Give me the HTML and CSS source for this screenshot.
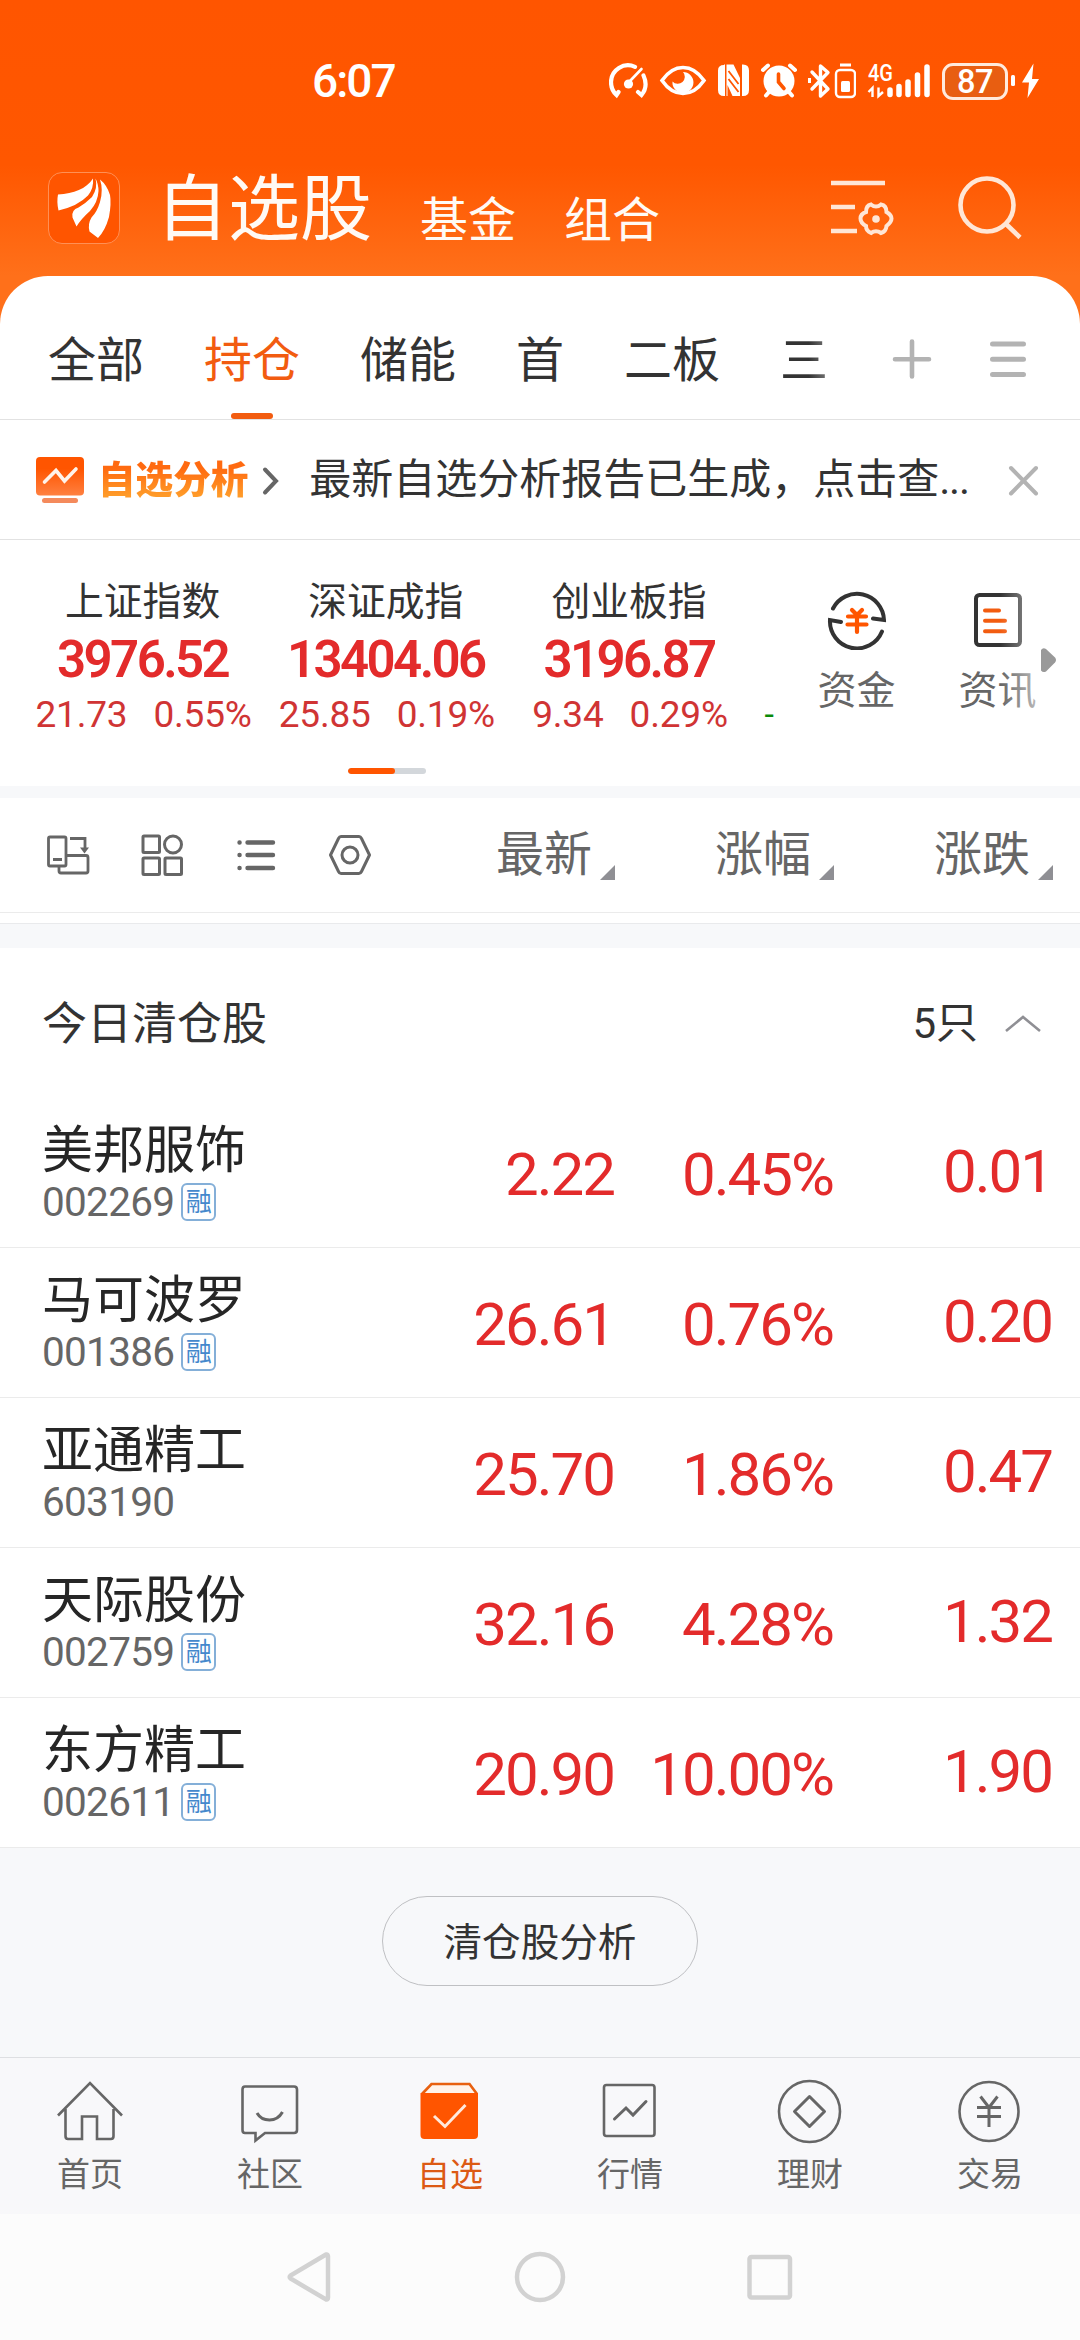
FILE: index.html
```html
<!DOCTYPE html>
<html lang="zh-CN">
<head>
<meta charset="utf-8">
<title>自选股</title>
<link rel="stylesheet" href="styles.css">
</head>
<body>
<div class="app">
  <header class="top">
    <div class="status">
      <span class="clock">6:07</span>
      <div class="status-icons">
        <svg class="i-gauge" width="40" height="38" viewBox="609 62 40 38" fill="none" stroke="#fff" stroke-width="4.2" stroke-linecap="round"><path d="M635 66.8A17 17 0 0 0 611 82q0 8 5.500 13l2-3M643.500 75.500q5 11-2 19.500l-3.500-3"/><path d="M641.500 69L630 81" stroke-width="2.600"/><circle cx="628.500" cy="84" r="4.600" fill="#fff" stroke="none"/></svg>
        <svg class="i-eye" width="48" height="38" viewBox="659 62 48 38"><path d="M662 80.500Q671 67.500 683 67.500T704 80.500Q695 93.500 683 93.500T662 80.500Z" fill="none" stroke="#fff" stroke-width="3.600"/><path d="M683 72a10.500 10.500 0 1 1-10.500 9.500a6.500 6.500 0 0 0 10.500-9.500Z" fill="#fff"/></svg>
        <svg class="i-nfc" width="32" height="38" viewBox="718 62 32 38" fill="#fff"><path d="M724 64.500h1V96h-1q-6 0-6-6V70.500q0-5.500 6-5.500ZM743 64.500q6 0 6 6V90q0 6-6 6h-1V64.500ZM726.500 64.500h7L740 78v-13 31h-7.500L727.500 85v11h-1Z"/><path d="M728.500 71l10 13M728.500 79l10 13" stroke="#ff5600" stroke-width="1.800"/></svg>
        <svg class="i-alarm" width="38" height="38" viewBox="760 62 38 38"><g stroke="#fff" stroke-width="4" stroke-linecap="round"><path d="M763 70l5-4.500M795 70l-5-4.500M769 92l-3 3.500M789 92l3 3.500"/></g><circle cx="779" cy="81" r="15.500" fill="#fff"/><path d="M778.500 74v8l5.500 6.500" fill="none" stroke="#ff5600" stroke-width="3.600" stroke-linecap="round"/></svg>
        <svg class="i-bt" width="48" height="38" viewBox="808 62 48 38" fill="none" stroke="#fff"><path d="M812 72l16 17-7.500 7V66l7.500 6.500L812 89" stroke-width="3.400" stroke-linejoin="round" stroke-linecap="round"/><path d="M809.500 78v5" stroke-width="3"/><path d="M840 65h11" stroke-width="3"/><rect x="836" y="70" width="19" height="27" rx="4" stroke-width="2.400"/><rect x="841" y="81" width="9" height="11" rx="1.500" fill="#fff" stroke="none"/></svg>
        <svg class="i-signal" width="64" height="54" viewBox="867 54 64 54"><text class="net" x="868" y="80.500" textLength="25" lengthAdjust="spacingAndGlyphs">4G</text><g stroke="#fff" stroke-width="5.500" stroke-linecap="round"><path d="M890 90v4.500M899 86.500v8M908 82v12.500M917.500 75v19.500M927 67v27.500"/></g><path d="M872.500 97V88l-4 4M878.500 87.500V96l4.500-4" fill="none" stroke="#fff" stroke-width="2.400"/></svg>
        <div class="battery"><span class="battery-level">87</span></div>
        <svg class="i-bolt" width="30" height="38" viewBox="1010 62 30 38" fill="#fff"><rect x="1011" y="75" width="4" height="11" rx="1.500"/><path d="M1033.500 63.500L1022 82.500h7L1027.500 98 1039 79h-7Z"/></svg>
      </div>
    </div>
    <div class="titlebar">
      <div class="logo"><svg width="72" height="72" viewBox="48 172 72 72" fill="#fff"><path d="M93 178.500C86 189 74 193.500 58 194.500Q56.500 202 58.500 210.500Q78 206 88 195.500Q94 188 93 178.500Z"/><path d="M95.500 178.500Q98 188 92 197Q86 203 78.500 207.500Q71 210 72.500 217.500L76.500 226.500Q81 219 90 211Q98 202 98.500 191Q98.500 184 95.500 178.500Z"/><path d="M100 179.500Q103.500 190 100 202Q97 212 91.500 217.500Q87.500 224 89.500 231.500L98 238Q105 231 109 217Q111.500 203 110 195Q107 185 100 179.500Z"/></svg></div>
      <span class="title">自选股</span>
      <span class="sub">基金</span>
      <span class="sub sub-2">组合</span>
      <svg class="i-set" width="64" height="60" viewBox="830 179 64 60" fill="none" stroke="#ffe6d6" stroke-width="4.600"><path d="M831 184h54M831 208h24M831 232h26"/><path d="M871 205.500Q876 209.500 881 205.500Q886.500 206.500 886.500 213Q891.500 216 891.500 219.500T886.500 227Q886 232.500 881 234Q876 230.500 871 234Q866 232 866 227Q860.500 224 860.500 219.500T866 213Q866 206.500 871 205.500Z" stroke-width="4"/><circle cx="876" cy="220" r="3.800" fill="#ffe6d6" stroke="none"/></svg>
      <svg class="i-search" width="66" height="66" viewBox="957 175 66 66" fill="none" stroke="#ffe6d6" stroke-width="4.600"><circle cx="987" cy="205" r="26.500"/><path d="M1005.500 223.500L1020 237.500"/></svg>
    </div>
  </header>

  <main class="panel">
    <nav class="groups">
      <span class="group">全部</span><span class="group active">持仓</span><span class="group">储能</span><span class="group">首</span><span class="group">二板</span><span class="group fade">三</span>
      <svg class="i-plus" width="40" height="42" viewBox="892 338 40 42" stroke="#b3b3b3" stroke-width="4.600" stroke-linecap="round"><path d="M912 341.500v35M895 359.300h34"/></svg>
      <svg class="i-menu" width="38" height="42" viewBox="989 338 38 42" stroke="#b3b3b3" stroke-width="5" stroke-linecap="round"><path d="M992.500 344h31M992.500 359.300h31M992.500 374.500h31"/></svg>
    </nav>

    <section class="notice">
      <svg width="48" height="48" viewBox="36 453 48 48"><defs><linearGradient id="g" x1="0" y1="0" x2="0" y2="1"><stop offset=".3" stop-color="#ff5500"/><stop offset="1" stop-color="#ff8040"/></linearGradient></defs><rect x="36" y="454" width="48" height="38.500" rx="4" fill="url(#g)"/><path d="M44.500 479L56 467.500 64.500 478 76 466" fill="none" stroke="#fff3ea" stroke-width="3.600" stroke-linecap="round"/><rect x="42" y="495" width="36" height="5" rx="2.500" fill="#f48a5c"/></svg>
      <span class="notice-tag">自选分析</span>
      <svg class="i-arrow" width="18" height="30" viewBox="262 465 18 30" fill="none" stroke="#666" stroke-width="4" stroke-linecap="round"><path d="M265 468.500L276 480 265 491.500"/></svg>
      <span class="notice-text">最新自选分析报告已生成，点击查<span class="dots">...</span></span>
      <svg class="i-close" width="32" height="32" viewBox="1007 465 32 32" stroke="#b3b3b3" stroke-width="4" stroke-linecap="round"><path d="M1011 468l25 25.500M1036 468l-25 25.500"/></svg>
    </section>

    <section class="market">
      <div class="indices">
        <div class="index"><span class="index-name">上证指数</span><b class="index-value">3976.52</b><span class="index-change"><i>21.73</i><i>0.55%</i></span></div>
        <div class="index"><span class="index-name">深证成指</span><b class="index-value">13404.06</b><span class="index-change"><i>25.85</i><i>0.19%</i></span></div>
        <div class="index"><span class="index-name">创业板指</span><b class="index-value">3196.87</b><span class="index-change"><i>9.34</i><i>0.29%</i></span></div>
        <span class="next-index">-</span>
      </div>
      <div class="pager"><div class="pager-on"></div></div>
      <div class="tools">
        <div class="tool"><svg width="60" height="60" viewBox="826 591 60 60" fill="none" stroke="#333" stroke-width="4"><path d="M832 609.500A27 27 0 0 1 883 621L872 619.500M881 632.500A27 27 0 0 1 829 621L840 623" stroke-linecap="round"/><path d="M851 611l5 5 5-5M847 617.500h18M846.500 625.500h19M856 617v16" stroke="#ff5500" stroke-width="4.200" stroke-linecap="round"/></svg><span>资金</span></div>
        <div class="tool"><svg width="60" height="60" viewBox="967 591 60 60" fill="none" stroke="#333" stroke-width="4"><rect x="975" y="596" width="44" height="50" rx="3.500"/><path d="M984 611.500h14M984 621.800h20M984 632.300h20" stroke="#f25c10" stroke-linecap="round"/></svg><span>资讯</span></div>
      </div>
      <div class="edge"></div>
      <svg class="i-more" width="16" height="26" viewBox="1041 647 16 26" fill="#999"><path d="M1041 650q2-3 5-1l9 8.500q2 2.500 0 5l-9 9q-3 1.500-5-1Z"/></svg>
    </section>
    <div class="band"></div>

    <section class="columns">
      <div class="view-icons">
        <svg width="44" height="44" viewBox="46 833 44 44" fill="none" stroke="#666" stroke-width="2.800"><rect x="48.500" y="837" width="17.500" height="29" rx="1.500"/><path d="M53 859.500h9M66 855.500h20q2 0 2 2v13.500q0 2-2 2H61q-2 0-2-2v-5M70 838.500h15v10"/><path d="M80 847.500h9l-4.500 6Z" fill="#666" stroke="none"/></svg>
        <svg width="44" height="44" viewBox="140 833 44 44" fill="none" stroke="#666" stroke-width="3"><rect x="143" y="836" width="16.500" height="16.500" rx="1"/><circle cx="173" cy="844.500" r="8.500"/><rect x="143" y="858" width="16.500" height="16.500" rx="1"/><rect x="165" y="858" width="16.500" height="16.500" rx="1"/></svg>
        <svg width="44" height="44" viewBox="234 833 44 44" stroke="#666" stroke-width="4.400" stroke-linecap="round"><path d="M247.500 842.500h25.500M247.500 855h25.500M247.500 868h25.500M239.500 842.500h.1M239.500 855h.1M239.500 868h.1"/></svg>
        <svg width="44" height="44" viewBox="328 833 44 44" fill="none" stroke="#666" stroke-width="3" stroke-linejoin="round"><path d="M341 836.500h18q1.500 0 2.500 2L369.500 855l-8 16.500q-1 2-2.500 2H341q-1.500 0-2.500-2L330.500 855l8-16.500q1-2 2.500-2Z"/><circle cx="350" cy="855" r="8"/></svg>
      </div>
      <div class="col c1"><span>最新</span></div>
      <div class="col c2"><span>涨幅</span></div>
      <div class="col c3"><span>涨跌</span></div>
    </section>
    <div class="band band-2"></div>

    <section class="cleared">
      <div class="cleared-head"><span class="cleared-title">今日清仓股</span><span class="count">5只</span><svg width="38" height="20" viewBox="1004 1012 38 20" fill="none" stroke="#8f8f94" stroke-width="2.600"><path d="M1006 1029l17-14 17 14"/></svg></div>
      <div class="stock"><div class="who"><div class="name">美邦服饰</div><div class="code">002269<span class="tag">融</span></div></div><span class="num n1">2.22</span><span class="num n2">0.45%</span><span class="num n3">0.01</span></div>
      <div class="stock"><div class="who"><div class="name">马可波罗</div><div class="code">001386<span class="tag">融</span></div></div><span class="num n1">26.61</span><span class="num n2">0.76%</span><span class="num n3">0.20</span></div>
      <div class="stock"><div class="who"><div class="name">亚通精工</div><div class="code">603190</div></div><span class="num n1">25.70</span><span class="num n2">1.86%</span><span class="num n3">0.47</span></div>
      <div class="stock"><div class="who"><div class="name">天际股份</div><div class="code">002759<span class="tag">融</span></div></div><span class="num n1">32.16</span><span class="num n2">4.28%</span><span class="num n3">1.32</span></div>
      <div class="stock"><div class="who"><div class="name">东方精工</div><div class="code">002611<span class="tag">融</span></div></div><span class="num n1">20.90</span><span class="num n2">10.00%</span><span class="num n3">1.90</span></div>
    </section>
    <div class="more"><div class="more-btn">清仓股分析</div></div>
  </main>

  <nav class="tabbar">
    <div class="tab"><svg width="70" height="66" viewBox="55 2078 70 66"><path d="M58 2115.500L90 2083l32 32.500M65.500 2109v27q0 3 2.500 3h14v-22.500h15V2139h14q2.500 0 2.500-3v-27"/></svg><span>首页</span></div>
    <div class="tab"><svg width="70" height="66" viewBox="235 2078 70 66"><path d="M245 2086.500h49q3 0 3 3V2130q0 3-3 3H265l-9.500 7.500V2133H245q-2.500 0-2.500-3v-40.500q0-3 2.500-3Z"/><path d="M257 2113q4 7 12.500 7t13-8" stroke-width="3"/></svg><span>社区</span></div>
    <div class="tab on"><svg width="70" height="66" viewBox="415 2078 70 66"><path d="M422 2094l9.500-10h38l7.500 10" stroke="#e8600f" fill="#fff3ea"/><path d="M420.500 2093h57.500v42q0 4-4 4h-49.500q-4 0-4-4Z" fill="#ff5500" stroke="none"/><path d="M434 2116l11 10.500 20.500-21.500" stroke="#ffe9dc" stroke-width="3"/></svg><span>自选</span></div>
    <div class="tab"><svg width="70" height="66" viewBox="595 2078 70 66"><rect x="604" y="2085" width="50.500" height="51" rx="2.500"/><path d="M614.500 2119l11.500-11 7 7 13-13.500" stroke-width="3" stroke-linecap="round"/></svg><span>行情</span></div>
    <div class="tab"><svg width="70" height="66" viewBox="775 2078 70 66"><circle cx="809.500" cy="2111.500" r="30.500"/><path d="M809.500 2096.500l15 15-15 15-15-15Z" stroke-linejoin="round" stroke-width="3"/></svg><span>理财</span></div>
    <div class="tab"><svg width="70" height="66" viewBox="955 2078 70 66"><circle cx="989" cy="2111.500" r="29.500"/><path d="M980.500 2096.500l8.500 11 8.500-11M977 2107.500h24M977 2116.500h24M989 2107v20" stroke-width="3"/></svg><span>交易</span></div>
  </nav>
  <div class="sysnav">
    <svg width="60" height="60" viewBox="280 2247 60 60"><path d="M326 2254.500L290.500 2275.500q-1.500 1.500 0 3L326 2299.500q2 .5 2-2v-41q0-2.500-2-2Z"/></svg>
    <svg width="60" height="60" viewBox="510 2247 60 60"><circle cx="540" cy="2277" r="23"/></svg>
    <svg width="60" height="60" viewBox="739 2247 60 60"><rect x="748.500" y="2257" width="40.500" height="40.500" rx="2"/></svg>
  </div>
</div>
</body>
</html>
```
FILE: styles.css
```css
* { box-sizing: border-box; }
body { margin: 0; background: #fff; font-family: Roboto, "Noto Sans CJK SC", sans-serif; color: #333; }
svg { display: block; flex: none; }
i { font-style: normal; }
span { white-space: nowrap; }
.app { width: 1080px; height: 2340px; display: flex; flex-direction: column; overflow: hidden; background: linear-gradient(#ff5500 0, #ff5700 165px, #ff701a 276px, #ff701a 340px, #fff 341px); }

.top { height: 276px; flex: none; }
.status { height: 162px; display: flex; color: #fff; padding-left: 312px; }
.clock { width: 297px; font-size: 46px; font-weight: 500; line-height: 163px; letter-spacing: -2px; }
.status-icons { display: flex; align-items: center; height: 162px; }
.i-eye { margin-left: 10px; }
.i-nfc { margin-left: 11px; }
.i-alarm { margin-left: 10px; }
.i-bt { margin-left: 10px; }
.i-signal { margin-left: 11px; }
.net { font-size: 23px; font-weight: 500; fill: #fff; }
.battery { margin-left: 11px; width: 66px; height: 37px; border: 3px solid #ffeadc; border-radius: 11px; background: rgba(190, 110, 50, .35); text-align: center; }
.battery-level { display: block; font-size: 32.5px; font-weight: 500; line-height: 32px; letter-spacing: -.5px; }
.i-bolt { margin-left: 2px; }
.titlebar { display: flex; height: 90px; align-items: center; padding-left: 48px; margin-top: 1px; color: #fffaf5; }
.logo { width: 72px; height: 72px; border: 1.5px solid #ff9055; border-radius: 14px; background: #ff5500; overflow: hidden; }
.logo svg { margin: -1px; }
.title { font-size: 72px; line-height: 90px; margin-left: 36px; padding-top: 4px; }
.sub { font-size: 48px; line-height: 60px; margin-left: 48px; padding-top: 26px; }
.i-set { margin-left: 170px; }
.i-search { margin-left: 63px; }

.panel { height: 1781px; flex: none; background: #fff; border-radius: 48px 48px 0 0; overflow: hidden; display: flex; flex-direction: column; }
.groups { height: 144px; flex: none; display: flex; align-items: center; gap: 60px; padding: 26px 0 0 48px; border-bottom: 1px solid #e2e2e2; font-size: 48px; line-height: 60px; }
.group { height: 117px; line-height: 118px; }
.group.active { color: #f25c10; display: flex; flex-direction: column; align-items: center; }
.group.active::after { content: ""; width: 42px; height: 6px; border-radius: 3px; background: #f25c10; margin-top: -7px; }
.group.fade { width: 48px; background: linear-gradient(90deg, #333 60%, #777); background-clip: text; color: transparent; }
.i-plus { margin-left: 4px; margin-bottom: 4px; }
.i-menu { margin-left: -3px; margin-bottom: 4px; }

.notice { height: 120px; flex: none; display: flex; align-items: center; padding-left: 36px; border-bottom: 1px solid #e2e2e2; line-height: 60px; }
.notice-tag { margin-left: 14px; font-size: 37.6px; font-weight: 900; background: linear-gradient(#ff6a10 30%, #ff9a28 75%); background-clip: text; color: transparent; }
.i-arrow { margin-left: 14px; margin-top: 2px; }
.notice-text { margin-left: 29px; font-size: 42px; width: 698px; }
.dots { letter-spacing: -1.3px; }
.i-close { margin-top: 2px; }

.market { height: 246px; flex: none; position: relative; display: grid; grid-template-columns: 774px 1fr; grid-template-rows: 228px 6px; }
.indices { display: flex; padding: 37px 0 0 21px; height: 228px; }
.index { width: 244px; display: flex; flex-direction: column; align-items: center; }
.index-name { font-size: 38.8px; line-height: 50px; }
.index-value { font-size: 51px; line-height: 60px; margin-top: 3px; font-weight: 600; letter-spacing: -2.6px; color: #e32b2b; }
.index-change { display: flex; gap: 26px; font-size: 37px; line-height: 44px; margin-top: 3px; letter-spacing: -.2px; padding-left: 2px; color: #d03434; }
.next-index { color: #0a8a0a; font-size: 34px; line-height: 44px; margin-top: 115px; margin-left: 14px; }
.pager { grid-row: 2; justify-self: center; width: 78px; height: 6px; border-radius: 3px; background: #d3d7db; overflow: hidden; }
.pager-on { width: 47px; height: 6px; border-radius: 3px; background: #ff5500; }
.tools { grid-column: 2; grid-row: 1; display: flex; padding: 50px 0 0 12px; }
.tool { width: 141px; display: flex; flex-direction: column; align-items: center; font-size: 39px; line-height: 50px; color: #666; flex: none; }
.tool span { margin-top: 16px; }
.edge { position: absolute; right: 0; top: 40px; width: 80px; height: 140px; background: linear-gradient(90deg, rgba(255,255,255,0), rgba(255,255,255,.7) 60%); }
.i-more { position: absolute; left: 1041px; top: 107px; }
.band { height: 12px; flex: none; background: #f7f8fa; }

.columns { height: 115px; flex: none; border-bottom: 1px solid #ebebeb; display: flex; align-items: center; padding-left: 46px; }
.view-icons { display: flex; gap: 50px; width: 350px; }
.col { width: 219px; height: 60px; padding-left: 100px; display: flex; justify-content: space-between; align-items: flex-end; font-size: 48px; line-height: 60px; color: #666; }
.col::after { content: ""; width: 15px; height: 15px; background: #8f8f94; clip-path: polygon(100% 0, 100% 100%, 0 100%); margin-bottom: 5px; }
.band-2 { margin-top: 10px; height: 25px; border-top: 1px solid #e9eaec; }

.cleared { flex: none; }
.cleared-head { height: 150px; display: flex; align-items: center; padding: 2px 38px 0 42px; }
.cleared-title { font-size: 45px; line-height: 60px; flex: 1; padding-top: 2px; }
.count { font-size: 42px; line-height: 60px; margin-right: 26px; }
.stock { height: 150px; border-bottom: 1px solid #ebebeb; display: grid; grid-template-columns: 317px 255px 221px 221px; justify-content: start; padding-left: 42px; width: 1080px; }
.stock .n1 { grid-column: 2; }
.stock { grid-template-columns: 317px 255px 219px 219px; }
.who { padding-top: 22px; }
.name { font-size: 51px; line-height: 62px; color: #262626; }
.code { display: flex; align-items: center; height: 42px; margin-top: -1px; font-size: 40.5px; letter-spacing: -.7px; color: #666; }
.tag { margin-left: 7px; width: 35px; height: 38px; border: 2px solid #84afd8; border-radius: 6px; font-size: 26px; line-height: 35px; color: #4488cc; text-align: center; letter-spacing: 0; }
.num { font-size: 60px; letter-spacing: -2px; line-height: 154px; height: 149px; text-align: right; color: #e32b2b; }
.n3 { line-height: 148px; }
.more { flex: 1; background: #f7f8fa; display: flex; justify-content: center; align-items: flex-start; padding-top: 48px; }
.more-btn { width: 316px; height: 90px; border: 1px solid #bfc0c3; border-radius: 45px; font-size: 38.600px; line-height: 91px; text-align: center; color: #333; }

.tabbar { height: 157px; flex: none; border-top: 1px solid #dedfe2; background: #f8f8fa; display: flex; }
.tab { width: 180px; padding-top: 20px; display: flex; flex-direction: column; align-items: center; font-size: 33px; line-height: 40px; color: #666; }
.tab span { margin-top: 11px; }
.tab svg { fill: none; stroke: #666; stroke-width: 2.600px; }
.tab.on { color: #dc5a14; }
.sysnav { flex: 1; background: #fcfcfc; display: flex; justify-content: center; align-items: center; gap: 170px; }
.sysnav svg { fill: none; stroke: #d2d2d2; stroke-width: 4.500px; }
```
